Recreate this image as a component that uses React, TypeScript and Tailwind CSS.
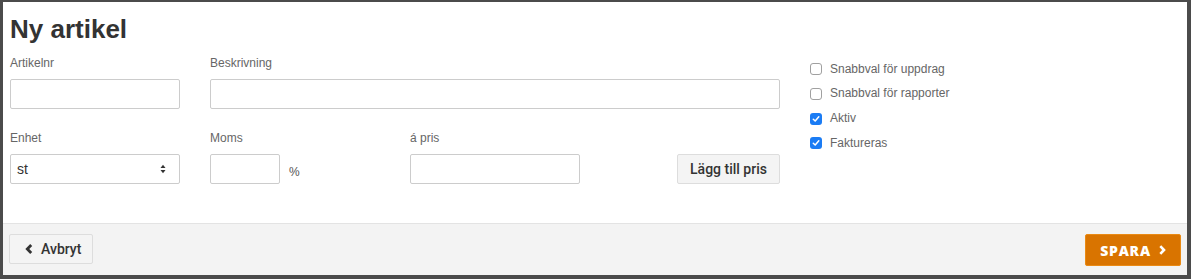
import React from "react";

const font = { fontFamily: '"Liberation Sans", Arial, sans-serif' };

function Check({ checked, label }: { checked: boolean; label: string }) {
  return (
    <div className="flex items-center h-[24.67px] gap-[8px]">
      {checked ? (
        <span className="w-[12px] h-[12px] rounded-[3px] bg-[#1b7cf4] flex items-center justify-center">
          <svg width="8" height="8" viewBox="0 0 8 8">
            <path d="M1.3 4.2 L3.2 6 L6.8 1.8" fill="none" stroke="white" strokeWidth="1.5" strokeLinecap="round" strokeLinejoin="round" />
          </svg>
        </span>
      ) : (
        <span className="w-[12px] h-[12px] rounded-[3px] border border-[#a0a0a0] bg-white" />
      )}
      <span className="text-[12px] leading-[17px] text-[#666]">{label}</span>
    </div>
  );
}

function Label({ children }: { children: React.ReactNode }) {
  return <div className="text-[12px] leading-[17px] text-[#666] mb-[7px]">{children}</div>;
}

const inputCls = "h-[30px] border border-[#cccccc] rounded-[2px] bg-white";

export default function App() {
  return (
    <div
      className="w-[1191px] h-[279px] border-l-[3px] border-t-[2px] border-r-[4px] border-b-[4px] border-[#4b4b4b] flex flex-col bg-white"
      style={font}
    >
      <div className="flex-1 px-[7px] pt-[12px]">
        <h1 className="text-[26px] leading-[30px] font-bold text-[#333]">Ny artikel</h1>
        <div className="flex">
          <div className="w-[770px] grid grid-cols-4 gap-x-[30px]">
            <div className="mt-[11px]">
              <Label>Artikelnr</Label>
              <div className={inputCls} />
            </div>
            <div className="mt-[11px] col-span-3">
              <Label>Beskrivning</Label>
              <div className={inputCls} />
            </div>
            <div className="mt-[21px]">
              <Label>Enhet</Label>
              <div className={`${inputCls} flex items-center justify-between pl-[6px] pr-[13px]`}>
                <span className="text-[14px] text-[#333]">st</span>
                <svg width="6" height="10" viewBox="0 0 6 10">
                  <path d="M0.5 4 L3 0.8 L5.5 4 Z" fill="#333" />
                  <path d="M0.5 6 L3 9.2 L5.5 6 Z" fill="#333" />
                </svg>
              </div>
            </div>
            <div className="mt-[21px]">
              <Label>Moms</Label>
              <div className="flex items-end">
                <div className={`${inputCls} w-[70px]`} />
                <span className="ml-[9px] mb-[3px] text-[12px] leading-[17px] text-[#555]">%</span>
              </div>
            </div>
            <div className="mt-[21px]">
              <Label>á pris</Label>
              <div className={inputCls} />
            </div>
            <div className="mt-[21px] flex items-end justify-end">
              <button
                className="h-[30px] w-[103px] border border-[#dddddd] rounded-[2px] bg-[#f4f4f4] text-[14px] font-medium text-[#333]"
                style={{ fontFamily: 'Roboto, "Liberation Sans", sans-serif' }}
              >
                Lägg till pris
              </button>
            </div>
          </div>
          <div className="ml-[30px] pt-[13px] flex flex-col">
            <Check checked={false} label="Snabbval för uppdrag" />
            <Check checked={false} label="Snabbval för rapporter" />
            <Check checked={true} label="Aktiv" />
            <Check checked={true} label="Faktureras" />
          </div>
        </div>
      </div>
      <div className="h-[52px] border-t border-[#e3e3e3] bg-[#f3f3f3] flex items-start justify-between px-[6px] pt-[10px]">
        <button
          className="h-[30px] w-[84px] border border-[#dddddd] rounded-[2px] bg-[#f4f4f4] flex items-center pl-[15px] gap-[8px] text-[14px] font-medium text-[#333]"
          style={{ fontFamily: 'Roboto, "Liberation Sans", sans-serif' }}
        >
          <svg width="8" height="10" viewBox="0 0 8 10">
            <path d="M6.2 1 L2.3 5 L6.2 9" fill="none" stroke="#333" strokeWidth="2.8" strokeLinejoin="miter" />
          </svg>
          Avbryt
        </button>
        <button
          className="h-[32px] w-[96px] border border-[#ea8a14] rounded-[2px] bg-[#d97400] flex items-center justify-center gap-[8px] text-[14px] font-extrabold tracking-[0.8px] text-white"
          style={{ fontFamily: '"Open Sans", sans-serif' }}
        >
          SPARA
          <svg width="7" height="10" viewBox="0 0 7 10">
            <path d="M1.3 1.2 L5 5 L1.3 8.8" fill="none" stroke="white" strokeWidth="2.6" />
          </svg>
        </button>
      </div>
    </div>
  );
}
